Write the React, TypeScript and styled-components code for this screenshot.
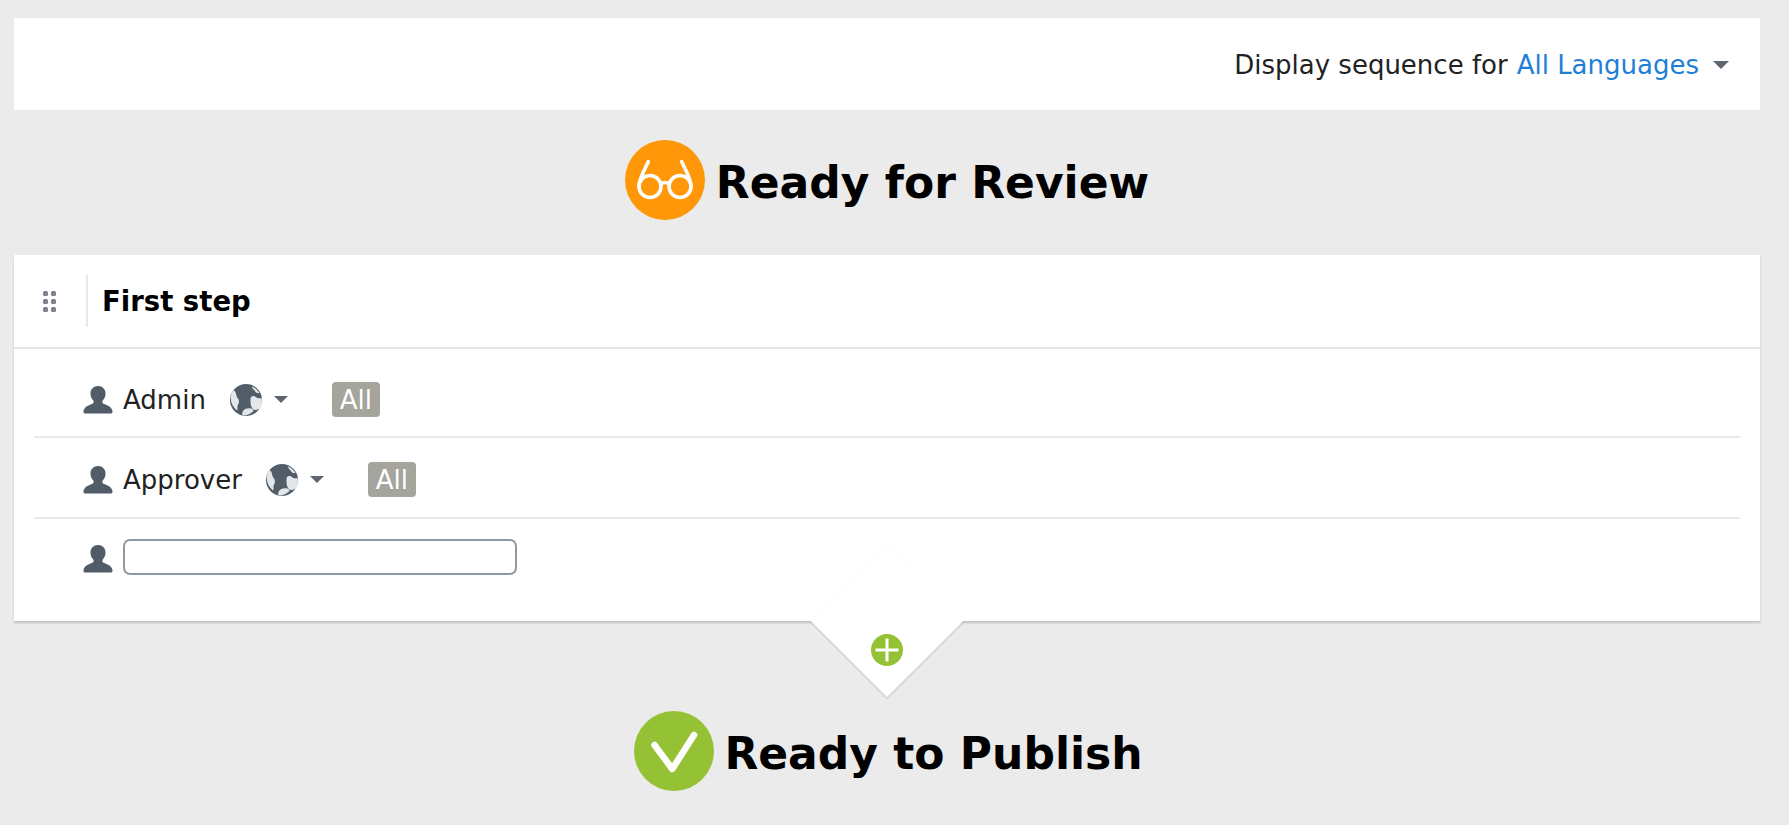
import { ReactElement } from "react";
import styled, { createGlobalStyle } from "styled-components";

const GlobalStyle = createGlobalStyle`
  html, body {
    margin: 0;
    padding: 0;
    background: #ebebeb;
  }
  body {
    font-family: "DejaVu Sans", Verdana, sans-serif;
    color: #222;
  }
`;

const Page = styled.main`
  width: 1746px;
  height: 825px;
  padding: 18px 29px 0 14px;
  overflow: hidden;
`;

const TopBar = styled.header`
  display: flex;
  align-items: center;
  justify-content: flex-end;
  height: 92px;
  padding: 2px 31px 0 0;
  box-sizing: border-box;
  background: #fff;
  font-size: 26px;
`;

const LanguageLink = styled.a`
  color: #1f7fd6;
  margin-left: 9px;
`;

const Caret = styled.span<{ $size?: number; $gap: number }>`
  display: inline-block;
  margin-left: ${(p) => p.$gap}px;
  border-style: solid;
  border-width: ${(p) => p.$size ?? 8}px ${(p) => p.$size ?? 8}px 0;
  border-color: #5f666e transparent transparent;
`;

const StateHeading = styled.h2<{ $top: number; $bottom: number; $gap: number; $shift: number }>`
  display: flex;
  align-items: center;
  justify-content: center;
  gap: ${(p) => p.$gap}px;
  height: 80px;
  margin: ${(p) => p.$top}px 0 ${(p) => p.$bottom}px;
  padding-left: ${(p) => p.$shift}px;
  font-size: 44px;
  font-weight: 700;
  color: #000;
`;

const HeadingText = styled.span`
  position: relative;
  top: 2px;
`;

const StateIcon = styled.span<{ $color: string }>`
  display: flex;
  width: 80px;
  height: 80px;
  border-radius: 50%;
  background: ${(p) => p.$color};
`;

const Card = styled.section`
  position: relative;
  background: #fff;
  box-shadow: 0 2px 2px rgba(0, 0, 0, 0.18);
`;

const CardHeader = styled.div`
  display: flex;
  align-items: center;
  height: 92px;
  padding-left: 29px;
  border-bottom: 2px solid #e6e6e6;
`;

const Grip = styled.span`
  display: grid;
  grid-template-columns: 5px 5px;
  gap: 3px;
  width: 13px;
  margin-right: 30px;
`;

const GripDot = styled.i`
  display: block;
  width: 5px;
  height: 5px;
  border-radius: 1.500px;
  background: #7b838d;
`;

const CardTitle = styled.h3`
  display: flex;
  align-items: center;
  height: 52px;
  margin: 0;
  padding-left: 14px;
  border-left: 2px solid #e8e8e8;
  font-size: 27.500px;
  font-weight: 700;
  color: #000;
`;

const ReviewerList = styled.ul`
  list-style: none;
  margin: 0 20px;
  padding: 0;
`;

const Reviewer = styled.li`
  display: flex;
  align-items: center;
  box-sizing: border-box;
  height: 81px;
  padding: 4px 0 0 49px;
  font-size: 26px;
  border-bottom: 2px solid #e9e9e9;

  &:first-child {
    height: 89px;
    padding-top: 14px;
  }
  &:last-child {
    height: 102px;
    align-items: flex-start;
    padding-top: 20px;
    border-bottom: none;
  }
`;

const UserIcon = styled.svg`
  flex: none;
  width: 30px;
  height: 30px;
  margin-right: 10px;

  li:last-child > & {
    margin-top: 5px;
  }
`;

const GlobeIcon = styled.svg`
  flex: none;
  width: 32px;
  height: 32px;
  margin-left: 24px;
`;

const LanguageBadge = styled.span`
  display: flex;
  align-items: center;
  justify-content: center;
  width: 48px;
  height: 35px;
  margin-left: 44px;
  border-radius: 4px;
  background: #a5a49d;
  color: #fff;
  font-size: 26px;
`;

const UserInput = styled.input`
  display: block;
  width: 394px;
  height: 36px;
  box-sizing: border-box;
  border: 2px solid #8f98a3;
  border-radius: 7px;
  background: #fff;
`;

const Notch = styled.div`
  position: absolute;
  left: 819px;
  bottom: -54px;
  width: 108px;
  height: 108px;
  background: #fff;
  transform: rotate(45deg);
  box-shadow: 1px 1px 2px rgba(0, 0, 0, 0.16);
`;

const AddButton = styled.button`
  position: absolute;
  left: 857px;
  bottom: -45px;
  display: flex;
  align-items: center;
  justify-content: center;
  width: 32px;
  height: 32px;
  padding: 0;
  border: none;
  border-radius: 50%;
  background: #95c235;
`;

function User(): ReactElement {
  return (
    <UserIcon viewBox="0 0 30 30">
      <path
        fill="#515c69"
        d="M15 1c-4.500 0-7.500 3.200-7.500 7.500 0 3 1.200 5.600 3 7.300v2.200C8 20 1.500 20.500.5 26c-.2 1 .3 2.500 1.300 2.500h26.400c1 0 1.500-1.500 1.300-2.500-1-5.500-7.500-6-10-8v-2.200c1.800-1.700 3-4.300 3-7.300C22.500 4.200 19.500 1 15 1z"
      />
    </UserIcon>
  );
}

function Globe(): ReactElement {
  return (
    <GlobeIcon viewBox="0 0 32 32">
      <circle cx="16" cy="16" r="16" fill="#525d6a" />
      <path
        fill="#e4e7ea"
        d="M3.500 6C5.500 7 6 9.500 6.500 12c.5 2 2.500 3 2.500 5.500S7 21 7.500 24c.2 1 0 2-.5 2.500C.5 21-1.500 12.500 3.500 6z"
      />
      <path
        fill="#e4e7ea"
        d="M21 13c2-1.500 4-1 5.500.5 1.500 1 3.500 1 5 .5.800 3.500.5 7-1 10.500-1.500.5-3 1-4.500 1.500-2 .5-3.500-1-4.500-3-1-2.500-1.500-8-.5-10z"
      />
      <path fill="#e4e7ea" d="M13 27c2-2.500 5-3 8-2.500 1.500.3 2 1 2.500 2.500-3 3-7 5-11 4.500-.5-1.500-.5-3 .5-4.500z" />
      <path fill="#e4e7ea" d="M22 2.500c3 1 5.500 3.500 7.500 6.500-2 .5-4-.5-5-2.500-1-1.500-2.500-2-2.500-4z" />
    </GlobeIcon>
  );
}

const reviewers = ["Admin", "Approver"];

const App = (): ReactElement => {
  return (
    <>
      <GlobalStyle />
      <Page>
        <TopBar>
          Display sequence for
          <LanguageLink>All Languages</LanguageLink>
          <Caret $gap={14} />
        </TopBar>

        <StateHeading $top={30} $bottom={35} $gap={11} $shift={0}>
          <StateIcon $color="#ff9708">
            <svg width="80" height="80" viewBox="0 0 80 80" fill="none" stroke="#fff" strokeWidth="3.600" strokeLinecap="round">
              <circle cx="25" cy="46.500" r="11" />
              <circle cx="55" cy="46.500" r="11" />
              <path d="M36 44q4-3 8 0" />
              <path d="M23.300 21.700C19 31 14.500 38 14 46M56.700 21.700C61 31 65.500 38 66 46" />
            </svg>
          </StateIcon>
          <HeadingText>Ready for Review</HeadingText>
        </StateHeading>

        <Card>
          <CardHeader>
            <Grip>
              {Array.from({ length: 6 }, (_, i) => (
                <GripDot key={i} />
              ))}
            </Grip>
            <CardTitle>First step</CardTitle>
          </CardHeader>

          <ReviewerList>
            {reviewers.map((name) => (
              <Reviewer key={name}>
                <User />
                {name}
                <Globe />
                <Caret $gap={12} $size={7} />
                <LanguageBadge>All</LanguageBadge>
              </Reviewer>
            ))}
            <Reviewer>
              <User />
              <UserInput type="text" />
            </Reviewer>
          </ReviewerList>

          <Notch />
          <AddButton aria-label="Add">
            <svg width="24" height="24" viewBox="0 0 24 24" stroke="#fff" strokeWidth="3">
              <path d="M12 .5v23M.5 12h23" />
            </svg>
          </AddButton>
        </Card>

        <StateHeading $top={90} $bottom={0} $gap={10} $shift={3}>
          <StateIcon $color="#95c235">
            <svg width="80" height="80" viewBox="0 0 80 80" fill="none" stroke="#fff" strokeWidth="6.500" strokeLinecap="round" strokeLinejoin="round">
              <path d="M20.500 34l17.800 24L60 24" />
            </svg>
          </StateIcon>
          <HeadingText>Ready to Publish</HeadingText>
        </StateHeading>
      </Page>
    </>
  );
};

export default App;
